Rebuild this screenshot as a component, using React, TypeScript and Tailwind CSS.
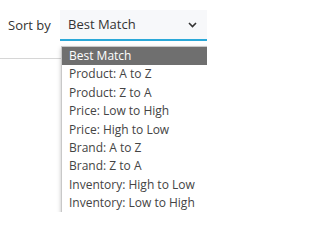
import React from 'react';

const OPTIONS = [
  'Best Match',
  'Product: A to Z',
  'Product: Z to A',
  'Price: Low to High',
  'Price: High to Low',
  'Brand: A to Z',
  'Brand: Z to A',
  'Inventory: High to Low',
  'Inventory: Low to High',
];

export default function App() {
  return (
    <div
      className="w-[207px] h-[212px] overflow-hidden bg-white relative"
      style={{ fontFamily: '"Open Sans", "Noto Sans", sans-serif' }}
    >
      <div className="flex items-center pt-[10px]">
        <span className="pl-[8px] w-[60px] shrink-0 text-[13px] text-[#333]">Sort by</span>
        <div className="w-[147px] shrink-0 h-[31px] bg-[#f7f8fa] border-b-2 border-[#2aa8d8] flex items-center pl-[8px] pr-[10px] justify-between">
          <span className="text-[13px] text-[#333]">Best Match</span>
          <svg width="9" height="6" viewBox="0 0 9 6">
            <path d="M1 1l3.5 3.5L8 1" fill="none" stroke="#333" strokeWidth="1.6" />
          </svg>
        </div>
      </div>
      <div className="h-px bg-[#d6d6d6] w-[61px] mt-[17px]" />

      {/* open list */}
      <div className="absolute left-[61px] top-[46px] w-[160px] bg-white border border-[#c8c8c8] shadow-[0_2px_4px_rgba(0,0,0,0.25)]">
        {OPTIONS.map((o, i) => (
          <div
            key={o}
            className={
              'h-[18.4px] leading-[18.4px] pl-[7px] text-[12px] ' +
              (i === 0 ? 'bg-[#6f6f6f] text-white' : 'text-[#444]')
            }
          >
            {o}
          </div>
        ))}
      </div>
    </div>
  );
}
